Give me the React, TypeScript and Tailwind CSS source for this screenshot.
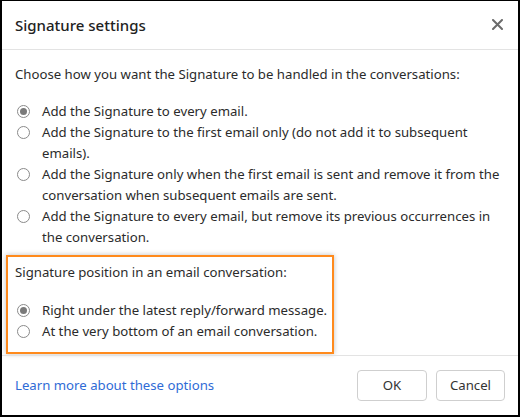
import React from "react";

function Radio({ checked }: { checked?: boolean }) {
  return (
    <span className="mt-[4px] flex h-[13px] w-[13px] shrink-0 items-center justify-center rounded-full border border-[#8a8a8a] bg-white">
      {checked && <span className="h-[7px] w-[7px] rounded-full bg-[#7a7a7a]" />}
    </span>
  );
}

function Option({ lines, checked }: { lines: string[]; checked?: boolean }) {
  return (
    <div className="flex items-start gap-[12px] pl-[15px]">
      <Radio checked={checked} />
      <div>
        {lines.map((l) => (
          <div key={l} className="whitespace-nowrap">
            {l}
          </div>
        ))}
      </div>
    </div>
  );
}

export default function App() {
  return (
    <div
      className="flex h-[417px] w-[520px] flex-col border-x-2 border-b-2 border-t border-black bg-white text-[13.2px] leading-[21px] text-[#2b2b2b]"
      style={{ fontFamily: '"Noto Sans", "Open Sans", sans-serif' }}
    >
      <div className="flex h-[49px] shrink-0 items-center justify-between border-b border-[#e3e3e3] pl-[13px] pr-[15px]">
        <span className="text-[15px] font-medium text-[#222]">Signature settings</span>
        <svg width="11" height="11" viewBox="0 0 11 11" className="mb-[1px]">
          <path d="M1 1L10 10M10 1L1 10" stroke="#6b6b6b" strokeWidth="2" strokeLinecap="round" />
        </svg>
      </div>

      <div className="flex flex-1 flex-col pt-[14px]">
        <div className="pl-[13px]">Choose how you want the Signature to be handled in the conversations:</div>
        <div className="mt-[16px] flex flex-col">
          <Option checked lines={["Add the Signature to every email."]} />
          <Option lines={["Add the Signature to the first email only (do not add it to subsequent", "emails)."]} />
          <Option
            lines={[
              "Add the Signature only when the first email is sent and remove it from the",
              "conversation when subsequent emails are sent.",
            ]}
          />
          <Option lines={["Add the Signature to every email, but remove its previous occurrences in", "the conversation."]} />
        </div>

        <div className="ml-[4px] mt-[7px] w-[328px] border-2 border-[#ff8a1c] pb-[10px] pt-[5px] shadow-[0_0_5px_rgba(0,0,0,0.25)]">
          <div className="pl-[7px]">Signature position in an email conversation:</div>
          <div className="mt-[17px] flex flex-col [&>div]:pl-[9px]">
            <Option checked lines={["Right under the latest reply/forward message."]} />
            <Option lines={["At the very bottom of an email conversation."]} />
          </div>
        </div>
      </div>

      <div className="flex h-[60px] shrink-0 items-center justify-between border-t border-[#e3e3e3] pl-[13px] pr-[13px]">
        <a className="text-[#2f6bd6]">Learn more about these options</a>
        <div className="flex gap-[9px]">
          <button className="h-[31px] w-[70px] rounded-[4px] border border-[#cfcfcf] bg-white text-[#333]">OK</button>
          <button className="h-[31px] w-[69px] rounded-[4px] border border-[#cfcfcf] bg-white text-[#333]">Cancel</button>
        </div>
      </div>
    </div>
  );
}
